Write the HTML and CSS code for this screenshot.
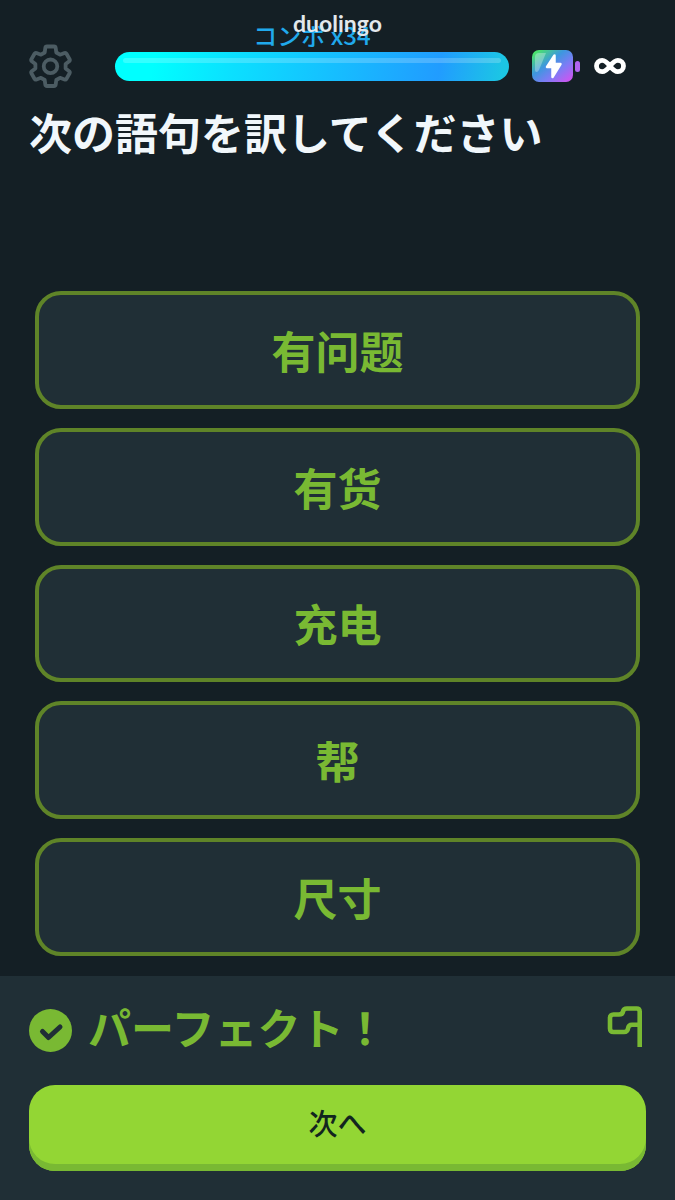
FILE: index.html
```
<!doctype html>
<html lang="ja">
<head>
    <meta charset="UTF-8">
    <meta name="viewport" content="width=device-width, initial-scale=1">
    <title>duolingo</title>
    <link rel="stylesheet" href="styles.css">
</head>
<body>
<div class="brand">duolingo</div>

<header class="topbar">
    <button class="icon-btn" type="button" aria-label="設定">
        <svg width="43" height="44" viewBox="0 0 43 44" fill="none" stroke="#4c5c63" stroke-width="3.8" stroke-linejoin="round">
            <path d="M18 2.500H25Q26.500 2.500 26.700 4L27.300 8.500L31 10.700L35.500 9Q36.800 8.600 37.500 9.800L40.600 15.200Q41.200 16.400 40.200 17.300L36.600 20V24.500L40.200 27.200Q41.200 28.100 40.600 29.300L37.500 34.700Q36.800 35.900 35.500 35.500L31 33.800L27.300 36L26.700 40.500Q26.500 42 25 42H18Q16.500 42 16.300 40.500L15.700 36L12 33.800L7.500 35.500Q6.200 35.900 5.500 34.700L2.400 29.300Q1.800 28.100 2.800 27.200L6.400 24.500V20L2.800 17.300Q1.800 16.400 2.400 15.200L5.500 9.800Q6.200 8.600 7.500 9L12 10.700L15.700 8.500L16.300 4Q16.500 2.500 18 2.500Z"/>
            <circle cx="21.500" cy="22.300" r="6.800"/>
        </svg>
    </button>
    <div class="progress-wrap">
        <span class="combo">コンボ x34</span>
        <div class="progress" role="progressbar" aria-label="進捗" aria-valuenow="100" aria-valuemin="0" aria-valuemax="100"></div>
    </div>
    <div class="energy">
        <svg width="49" height="34" viewBox="0 0 49 34" aria-hidden="true">
            <defs>
                <linearGradient id="battery" x1="0" y1="0" x2="1" y2="1">
                    <stop offset="0.080" stop-color="#4be36c"/>
                    <stop offset="0.400" stop-color="#3d97df"/>
                    <stop offset="0.650" stop-color="#7d7cf5"/>
                    <stop offset="1" stop-color="#dd4df0"/>
                </linearGradient>
            </defs>
            <rect x="0" y="1" width="41" height="32" rx="7" fill="url(#battery)"/>
            <path d="M7 4h7L7 21q-1 2-2.500 2T3 21V8q0-4 4-4z" fill="#fff" opacity=".3"/>
            <path d="M22.500 6.500 15 18h5.500V28L28.500 15H22.500z" fill="#fff" stroke="#fff" stroke-width="2.500" stroke-linejoin="round"/>
            <rect x="43" y="12" width="5" height="11" rx="2.500" fill="#b263ef"/>
        </svg>
        <svg width="32" height="18" viewBox="0 0 32 18" fill="none" stroke="#fff" stroke-width="4.800" role="img" aria-label="無制限">
            <path d="M16 9C13 5 11 3.300 8.200 3.300a5.700 5.700 0 0 0 0 11.400C11 14.700 13 13 16 9s5-5.700 7.800-5.700a5.700 5.700 0 0 1 0 11.400C21 14.700 19 13 16 9z"/>
        </svg>
    </div>
</header>

<main class="lesson">
    <h1>次の語句を訳してください</h1>
    <div class="cards" lang="zh-CN">
        <button class="card" type="button">有问题</button>
        <button class="card" type="button">有货</button>
        <button class="card" type="button">充电</button>
        <button class="card" type="button">帮</button>
        <button class="card" type="button">尺寸</button>
    </div>
</main>

<footer class="result">
    <div class="result-head">
        <svg width="43" height="43" viewBox="0 0 43 43" aria-hidden="true">
            <circle cx="21.500" cy="21.500" r="21.500" fill="#79b933"/>
            <path d="M13.500 22.500l6 6L31 18" fill="none" stroke="#202f36" stroke-width="5" stroke-linecap="round" stroke-linejoin="round"/>
        </svg>
        <h2>パーフェクト！</h2>
        <button class="icon-btn" type="button" aria-label="報告">
            <svg width="36" height="41" viewBox="0 0 36 41" fill="none" stroke="#79b933" stroke-width="4.600" stroke-linejoin="round">
                <path d="M32.700 41V5.500Q32.700 2.500 29.700 2.500H20Q16.500 2.500 16 5.500Q15.500 8.500 12 8.500H6.500Q3 8.500 3 12V22.500Q3 26 6.500 26H17Q20.500 26 21 22.500Q21.500 18.700 25 18.700H32.700"/>
            </svg>
        </button>
    </div>
    <button class="next" type="button">次へ</button>
</footer>
</body>
</html>
```
FILE: styles.css
```
* {
    box-sizing: border-box;
}

body {
    margin: 0;
    min-height: 100vh;
    display: flex;
    flex-direction: column;
    background-color: #141f25;
    color: #f1f7fb;
    font-family: "Noto Sans CJK JP", sans-serif;
}

button {
    border: none;
    padding: 0;
    font-family: inherit;
    cursor: pointer;
}

svg {
    display: block;
}

/* sits on top of the combo label */
.brand {
    position: absolute;
    top: 10px;
    left: 0;
    right: 0;
    z-index: 1;
    text-align: center;
    font: 700 23px/26px Lato, sans-serif;
    color: #e3e8ec;
}

.topbar {
    display: flex;
    align-items: center;
    padding: 44px 49px 0 29px;
}

.icon-btn {
    background: none;
}

.progress-wrap {
    position: relative;
    flex: 1;
    margin: 0 23px 0 43px;
}

.combo {
    position: absolute;
    bottom: 100%;
    left: 0;
    right: 0;
    text-align: center;
    font-size: 24px;
    font-weight: 500;
    line-height: 34px;
    color: #20a9ec;
}

.progress {
    height: 29px;
    padding: 6px 8px;
    border-radius: 15px;
    background: linear-gradient(100deg, #00ffff 10%, #0be0ff 30%, #219cff 82%, #1cc6e4 98%);
}

.progress::before {
    content: "";
    display: block;
    height: 5px;
    border-radius: 3px;
    background-color: rgba(255, 255, 255, 0.2);
}

.energy {
    display: flex;
    align-items: center;
    gap: 13px;
}

.lesson {
    flex: 1;
    display: flex;
    flex-direction: column;
    padding: 11px 35px 20px;
}

h1 {
    margin: 0 -6px;
    font-size: 43px;
    font-weight: 700;
    line-height: 64px;
}

.cards {
    flex: 1;
    display: flex;
    flex-direction: column;
    gap: 19px;
    margin-top: 128px;
}

.card {
    flex: 1;
    min-height: 90px;
    border: 4px solid #5f8428;
    border-radius: 26px;
    background-color: #202f36;
    color: #79b933;
    font-family: "Noto Sans CJK SC", sans-serif;
    font-size: 44px;
    font-weight: 700;
    line-height: 64px;
}

.result {
    padding: 22px 29px 29px;
    background-color: #202f36;
}

.result-head {
    display: flex;
    align-items: center;
    gap: 16px;
    padding-right: 3px;
}

.result-head .icon-btn {
    padding-bottom: 8px;
}

h2 {
    flex: 1;
    margin: 0;
    padding-bottom: 8px;
    font-size: 43px;
    font-weight: 700;
    line-height: 56px;
    color: #79b933;
}

.next {
    width: 100%;
    height: 86px;
    margin-top: 23px;
    padding-bottom: 12px;
    border-radius: 26px;
    background-color: #93d634;
    box-shadow: inset 0 -7px #79b933;
    color: #12251f;
    font-size: 29px;
    font-weight: 500;
}
```
